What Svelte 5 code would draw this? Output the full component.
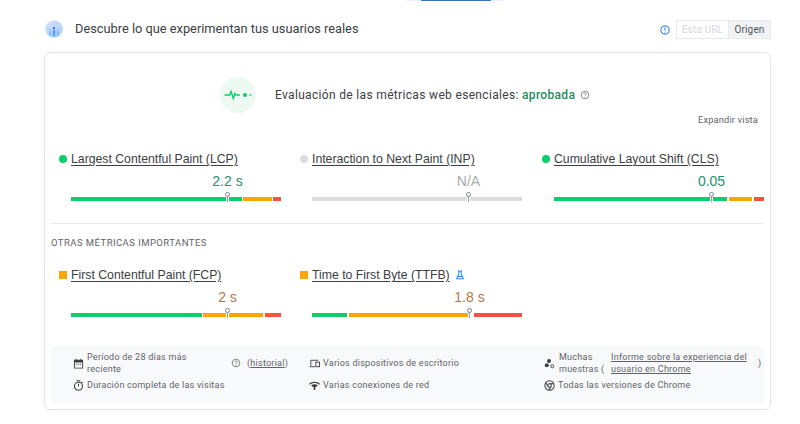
<script lang="ts">
  const coreMetrics = [
    { name: 'Largest Contentful Paint (LCP)', value: '2.2 s', tone: 'good', shape: 'dot', marker: 156, segs: [[0, 171, 'good'], [172, 29, 'warn'], [202, 8, 'bad']] },
    { name: 'Interaction to Next Paint (INP)', value: 'N/A', tone: 'none', shape: 'dot', marker: 156, segs: [[0, 210, 'none']] },
    { name: 'Cumulative Layout Shift (CLS)', value: '0.05', tone: 'good', shape: 'dot', marker: 157, segs: [[0, 173, 'good'], [175, 23, 'warn'], [200, 10, 'bad']] }
  ];
  const otherMetrics = [
    { name: 'First Contentful Paint (FCP)', value: '2 s', tone: 'warn', shape: 'square', marker: 156, lab: false, segs: [[0, 131, 'good'], [132, 60, 'warn'], [194, 16, 'bad']] },
    { name: 'Time to First Byte (TTFB)', value: '1.8 s', tone: 'warn', shape: 'square', marker: 157, lab: true, segs: [[0, 35, 'good'], [37, 120, 'warn'], [162, 48, 'bad']] }
  ];
</script>

{#snippet metric(m)}
  <div class="metric">
    <div class="metric-head">
      <span class="status {m.shape} {m.tone}"></span>
      <span class="metric-name">{m.name}</span>
      {#if m.lab}
        <svg class="flask" viewBox="0 0 12 12" width="10" height="10" fill="none" stroke="#1a73e8" stroke-width="1.1"><path d="M3.5 1.2h5M4.6 1.2v3.4L1.8 10.6h8.4L7.4 4.6V1.2M3.4 7.8h5.2" /></svg>
      {/if}
    </div>
    <div class="metric-value {m.tone}" style="width:{m.marker * 2 + 1}px">{m.value}</div>
    <div class="bar">
      {#each m.segs as s}
        <span class="seg {s[2]}" style="left:{s[0]}px;width:{s[1]}px"></span>
      {/each}
      <span class="marker" style="left:{m.marker}px"></span>
    </div>
  </div>
{/snippet}

<div class="page">
  <div class="top-tab"><span></span></div>

  <header class="head">
    <div class="head-left">
      <svg class="users-icon" viewBox="0 0 20 20" width="18" height="18">
        <defs>
          <linearGradient id="usr" x1="0" y1="0" x2="1" y2="1"><stop offset="0" stop-color="#d2e3fc" /><stop offset="1" stop-color="#aecbfa" /></linearGradient>
        </defs>
        <circle cx="10" cy="10" r="9.8" fill="url(#usr)" />
        <circle cx="10" cy="9" r="1.3" fill="#1a73e8" />
        <rect x="8.6" y="11.2" width="2.8" height="6.8" rx="0.8" fill="#4fa3f0" />
        <circle cx="5.6" cy="10.8" r="1" fill="#7cbcf4" />
        <rect x="4.4" y="12.4" width="2.4" height="4.6" rx="0.7" fill="#7cbcf4" />
        <circle cx="14.4" cy="10.8" r="1" fill="#7cbcf4" />
        <rect x="13.2" y="12.4" width="2.4" height="4.6" rx="0.7" fill="#7cbcf4" />
      </svg>
      <h2>Descubre lo que experimentan tus usuarios reales</h2>
    </div>
    <div class="head-right">
      <svg viewBox="0 0 12 12" width="10" height="10" fill="none"><circle cx="6" cy="6" r="4.9" stroke="#1a73e8" stroke-width="1.2" /><path d="M6 3v3.6M6 8v1.1" stroke="#1a73e8" stroke-width="1.2" /></svg>
      <div class="toggle">
        <button class="off">Esta URL</button>
        <button class="on">Origen</button>
      </div>
    </div>
  </header>

  <section class="card">
    <div class="verdict">
      <div class="pulse">
        <svg viewBox="0 0 28 14" width="28" height="14" fill="none" stroke="#0cce6b" stroke-width="1.4">
          <path d="M0.5 7h5l1.6-3.5 2.2 7 1.6-5 1 1.5h4" />
          <circle cx="21" cy="7" r="2" fill="#0cce6b" stroke="none" />
          <path d="M25.5 7h2" />
        </svg>
      </div>
      <p>Evaluación de las métricas web esenciales: <span class="pass">aprobada</span></p>
      <svg class="help" viewBox="0 0 12 12" width="10" height="10" fill="none" stroke="#70757a"><circle cx="6" cy="6" r="4.6" /><path d="M4.5 5a1.5 1.4 0 1 1 2.3 1.2c-.6.4-.8.6-.8 1.1M6 8.1v1" /></svg>
    </div>

    <div class="expand">Expandir vista</div>

    <div class="metrics">
      {#each coreMetrics as m}
        {@render metric(m)}
      {/each}
    </div>

    <div class="other">
      <div class="other-title">OTRAS MÉTRICAS IMPORTANTES</div>
      <div class="metrics">
        {#each otherMetrics as m}
          {@render metric(m)}
        {/each}
      </div>
    </div>

    <div class="foot">
      <div class="foot-item">
        <svg viewBox="0 0 12 12" width="11" height="11" fill="#3c4043"><path d="M1 2h2V.8h1V2h4V.8h1V2h2v9.5H1zm1 3v5.5h8V5zm1 1.2h1.2v1.2H3zm2.2 0h1.2v1.2H5.2zm2.2 0h1.2v1.2H7.4z" /></svg>
        <span class="foot-text">Período de 28 días más reciente</span>
        <svg class="foot-help" viewBox="0 0 12 12" width="10" height="10" fill="none" stroke="#70757a"><circle cx="6" cy="6" r="4.6" /><path d="M4.5 5a1.5 1.4 0 1 1 2.3 1.2c-.6.4-.8.6-.8 1.1M6 8.1v1" /></svg>
        <span class="hist">(<u>historial</u>)</span>
      </div>
      <div class="foot-item">
        <svg viewBox="0 0 12 12" width="11" height="11" fill="none" stroke="#3c4043"><path d="M2 8.5V2.5h8M.5 9.5h6" /><rect x="7.5" y="4.5" width="4" height="5" /></svg>
        <span>Varios dispositivos de escritorio</span>
      </div>
      <div class="foot-item">
        <svg viewBox="0 0 12 12" width="11" height="11" fill="#3c4043"><circle cx="5.5" cy="3.3" r="2.2" /><circle cx="3" cy="8" r="2.2" /><circle cx="9" cy="9" r="1.7" fill="none" stroke="#3c4043" /></svg>
        <span class="samples">Muchas muestras (</span>
        <u class="crux">Informe sobre la experiencia del usuario en Chrome</u>
        <span class="close">)</span>
      </div>
      <div class="foot-item">
        <svg viewBox="0 0 12 12" width="11" height="11" fill="none" stroke="#3c4043" stroke-width="1.2"><circle cx="6" cy="6.8" r="4.4" /><path d="M4 .8h4M6 4v3" /><path d="M9.4 2.2l1 1" /></svg>
        <span>Duración completa de las visitas</span>
      </div>
      <div class="foot-item">
        <svg viewBox="0 0 12 12" width="11" height="11" fill="#3c4043"><path d="M0 4.2C3.2 1.2 8.8 1.2 12 4.2L11.1 5.1C8.2 2.6 3.8 2.6 .9 5.1z" /><path d="M2.3 6C4.3 4.3 7.7 4.3 9.7 6L6.8 8.3v2.5H5.2V8.3z" /></svg>
        <span>Varias conexiones de red</span>
      </div>
      <div class="foot-item">
        <svg viewBox="0 0 12 12" width="11" height="11" fill="none" stroke="#3c4043" stroke-width="1.1"><circle cx="6" cy="6" r="5.1" /><circle cx="6" cy="6" r="2" /><path d="M6 4h4.6M4.3 7 2 3M7.7 7l-2.4 4" /></svg>
        <span>Todas las versiones de Chrome</span>
      </div>
    </div>
  </section>
</div>

<style>
  :global(body) {
    margin: 0;
    background: #fff;
    font-family: Roboto, "Liberation Sans", sans-serif;
    color: #3c4043;
  }
  .page {
    width: 800px;
    height: 424px;
    overflow: hidden;
    box-sizing: border-box;
    padding: 0 29px 0 44px;
    position: relative;
  }
  .top-tab {
    position: absolute;
    left: 407px;
    top: 0;
    width: 97px;
    height: 1px;
    background: #e8f0fe;
    display: flex;
    justify-content: center;
  }
  .top-tab span {
    width: 70px;
    height: 1px;
    background: #3b71c4;
  }

  /* header */
  .head {
    height: 52px;
    box-sizing: border-box;
    padding-top: 20px;
    display: flex;
    justify-content: space-between;
    align-items: flex-start;
  }
  .head-left {
    display: flex;
    align-items: center;
    gap: 12px;
    height: 18px;
    padding-left: 1px;
  }
  .head-left h2 {
    margin: 0;
    font-size: 12.8px;
    font-weight: 400;
    color: #3c4043;
    line-height: 18px;
  }
  .head-right {
    display: flex;
    align-items: center;
    gap: 6px;
    height: 19px;
  }
  .toggle {
    display: flex;
    height: 19px;
  }
  .toggle button {
    font: 10px/17px Roboto, sans-serif;
    padding: 0;
    letter-spacing: 0.15px;
    box-sizing: border-box;
  }
  .off {
    width: 53px;
    background: #fff;
    color: #d5d7da;
    border: 1px solid #e8eaed;
  }
  .on {
    width: 42px;
    background: #f1f3f4;
    color: #4f5357;
    border: 1px solid #e8eaed;
    border-left: 0;
  }

  /* card */
  .card {
    height: 358px;
    box-sizing: border-box;
    border: 1px solid #e3e4e6;
    border-radius: 6px;
    padding: 24px 6px 5px;
  }
  .verdict {
    display: flex;
    align-items: center;
    height: 36px;
    padding-left: 169px;
  }
  .pulse {
    width: 36px;
    height: 36px;
    border-radius: 50%;
    background: #ecfaf3;
    display: flex;
    align-items: center;
    justify-content: center;
    margin-right: 19px;
  }
  .verdict p {
    margin: 0;
    font-size: 12px;
    letter-spacing: 0.33px;
    color: #3c4043;
  }
  .pass {
    color: #1e8e5e;
    font-weight: 500;
  }
  .help {
    margin-left: 5px;
  }
  .expand {
    text-align: right;
    font-size: 9.3px;
    color: #5f6368;
    letter-spacing: 0.15px;
    padding-right: 6px;
    margin-top: 1px;
    height: 12px;
    line-height: 12px;
  }

  /* metrics */
  .metrics {
    display: grid;
    grid-template-columns: 241px 242px 241px;
    padding-left: 8px;
    margin-top: 25px;
  }
  .metric-head {
    display: flex;
    align-items: center;
    height: 16px;
  }
  .status {
    width: 8px;
    height: 8px;
    margin-right: 4px;
    flex: none;
  }
  .status.dot { border-radius: 50%; }
  .status.good { background: #0cce6b; }
  .status.none { background: #dadce0; }
  .status.warn { background: #ffa400; }
  .metric-name {
    font: 12.25px/16px "Liberation Sans", Arial, sans-serif;
    color: #3c4043;
    text-decoration: underline;
    text-underline-offset: 2px;
  }
  .flask { margin-left: 5px; }
  .metric-value {
    margin: 6px 0 0 12px;
    height: 16px;
    text-align: center;
    font: 14px/16px "Liberation Sans", Arial, sans-serif;
  }
  .metric-value.good { color: #26906a; }
  .metric-value.warn { color: #b5774d; }
  .metric-value.none { color: #a8abaf; }
  .bar {
    position: relative;
    margin: 8px 0 0 12px;
    width: 210px;
    height: 4px;
  }
  .seg {
    position: absolute;
    top: 0;
    height: 4px;
  }
  .seg.good { background: #0cce6b; }
  .seg.warn { background: #ffa400; }
  .seg.bad { background: #ff4e42; }
  .seg.none { background: #dadce0; }
  .marker {
    position: absolute;
    top: -1px;
    width: 3px;
    height: 7px;
    margin-left: -1px;
    background: #fff;
  }
  .marker::before {
    content: "";
    position: absolute;
    left: 1px;
    top: 0;
    width: 1px;
    height: 6px;
    background: #9aa0a6;
  }
  .marker::after {
    content: "";
    position: absolute;
    left: -1px;
    top: -4px;
    width: 3px;
    height: 3px;
    border: 1px solid #80868b;
    border-radius: 50%;
    background: #fff;
  }

  .other {
    margin-top: 22px;
    border-top: 1px solid #e8eaed;
    padding-top: 13px;
  }
  .other-title {
    font-size: 9.5px;
    line-height: 11px;
    letter-spacing: 0.45px;
    color: #5f6368;
  }
  .other .metrics { margin-top: 19px; }

  /* footer */
  .foot {
    margin-top: 29px;
    height: 57px;
    background: #f8f9fa;
    border-radius: 2px;
    box-sizing: border-box;
    padding: 4px 0 0 22px;
    display: grid;
    grid-template-columns: 236px 235px 1fr;
    grid-template-rows: 26px 18px;
    font-size: 9px;
    line-height: 12px;
    letter-spacing: 0.25px;
    color: #5f6368;
  }
  .foot-item {
    display: flex;
    align-items: center;
    gap: 3px;
  }
  .foot-text {
    width: 110px;
  }
  .foot-help {
    margin-left: 31px;
    margin-right: 3px;
  }
  .hist u, .crux {
    color: #5f6368;
  }
  .samples {
    width: 48px;
    margin-left: 1px;
  }
  .crux {
    width: 140px;
    margin-left: 1px;
  }
  .close {
    margin-left: 4px;
  }
</style>
